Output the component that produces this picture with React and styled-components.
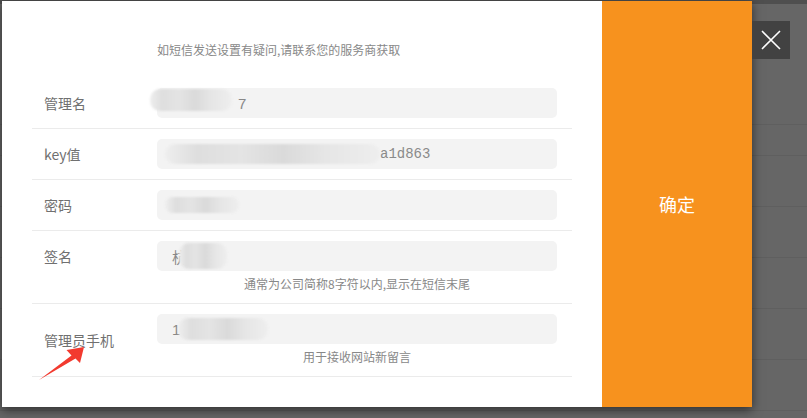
import React from "react";
import styled, { createGlobalStyle } from "styled-components";

const GlobalStyle = createGlobalStyle`
  html, body {
    margin: 0;
    padding: 0;
    width: 807px;
    height: 418px;
    overflow: hidden;
  }
  body {
    font-family: "Noto Sans CJK SC", "Noto Sans", sans-serif;
  }
`;

const Backdrop = styled.div`
  width: 807px;
  height: 418px;
  background-color: #666;
  background-image:
    linear-gradient(#4f4f4f 0 4px, transparent 4px),
    linear-gradient(transparent 124px, #5f5f5f 124px 125px, transparent 125px),
    repeating-linear-gradient(180deg, #5f5f5f 0 1px, transparent 1px 51px);
  background-repeat: no-repeat;
  background-size: 100% 100%, 100% 100%, 100% 300px;
  background-position: 0 0, 0 0, 0 155px;
  padding: 1px 0 0 2px;
  box-sizing: border-box;
`;

const Dialog = styled.div`
  position: relative;
  display: flex;
  width: 750px;
  height: 406px;
  box-shadow: 0 3px 10px rgba(0, 0, 0, 0.55);
`;

const FormPane = styled.div`
  width: 600px;
  background: #fff;
  padding: 0 30px;
  box-sizing: border-box;
`;

const Notice = styled.div`
  padding: 40px 0 19px 125px;
  font-size: 12px;
  line-height: 18px;
  color: #888;
`;

const Row = styled.div`
  display: flex;
  align-items: ${({ $labelLow }) => ($labelLow ? "center" : "flex-start")};
  border-bottom: 1px solid #ebebeb;
  padding: 10px 0;
`;

const Label = styled.div`
  width: 125px;
  padding-left: 12px;
  box-sizing: border-box;
  font-size: 14px;
  line-height: 30px;
  color: #707070;
`;

const Field = styled.div`
  width: 400px;
`;

const Input = styled.div`
  height: 30px;
  border-radius: 5px;
  background: #f3f3f3;
  padding-left: 15px;
  display: flex;
  align-items: center;
  font-family: "Liberation Sans", "Noto Sans CJK SC", sans-serif;
  font-size: 15px;
  color: #888;
  white-space: nowrap;
`;

const Mono = styled.span`
  font-family: "Liberation Mono", "DejaVu Sans Mono", monospace;
  font-size: 14px;
  color: #8a8a8a;
`;

const Smudge = styled.span`
  display: inline-block;
  width: ${({ $w }) => $w}px;
  height: ${({ $h }) => $h || 20}px;
  margin-left: ${({ $ml }) => $ml || 0}px;
  margin-top: ${({ $mt }) => $mt || 0}px;
  border-radius: 10px;
  background: linear-gradient(
    90deg,
    #eeeeee 0%,
    #dedede 15%,
    #e4e4e4 35%,
    #dadada 55%,
    #e6e6e6 75%,
    #eeeeee 100%
  );
  filter: blur(1px);
`;

const Hint = styled.div`
  padding-top: 4px;
  font-size: 12px;
  line-height: 18px;
  color: #888;
  text-align: center;
`;

const ConfirmPane = styled.button`
  width: 150px;
  border: none;
  background: #f7921e;
  color: #fff;
  font-family: inherit;
  font-size: 18px;
  cursor: pointer;
`;

const CloseButton = styled.button`
  position: absolute;
  left: 100%;
  top: 20px;
  width: 38px;
  height: 38px;
  border: none;
  padding: 0;
  background: #424242;
  display: flex;
  align-items: center;
  justify-content: center;
`;

const Arrow = styled.svg`
  position: absolute;
  left: 34px;
  top: 340px;
  width: 56px;
  height: 42px;
`;

const App = () => (
  <>
    <GlobalStyle />
    <Backdrop>
      <Dialog>
        <FormPane>
          <Notice>如短信发送设置有疑问,请联系您的服务商获取</Notice>
          <Row>
            <Label>管理名</Label>
            <Field>
              <Input>
                <Smudge $w={82} $h={22} $ml={-22} $mt={-6} />
                <span style={{ marginLeft: 6 }}>7</span>
              </Input>
            </Field>
          </Row>
          <Row>
            <Label>key值</Label>
            <Field>
              <Input>
                <Smudge $w={215} $ml={-7} />
                <Mono>a1d863</Mono>
              </Input>
            </Field>
          </Row>
          <Row>
            <Label>密码</Label>
            <Field>
              <Input>
                <Smudge $w={74} $h={16} $ml={-7} />
              </Input>
            </Field>
          </Row>
          <Row>
            <Label>签名</Label>
            <Field>
              <Input>
                <span>杭</span>
                <Smudge $w={48} $h={26} $ml={-8} />
              </Input>
              <Hint>通常为公司简称8字符以内,显示在短信末尾</Hint>
            </Field>
          </Row>
          <Row $labelLow>
            <Label>管理员手机</Label>
            <Field>
              <Input>
                <span>1</span>
                <Smudge $w={90} $h={22} $ml={-2} />
              </Input>
              <Hint>用于接收网站新留言</Hint>
            </Field>
          </Row>
        </FormPane>
        <ConfirmPane>确定</ConfirmPane>
        <CloseButton aria-label="close">
          <svg width="22" height="22" viewBox="0 0 22 22">
            <path d="M2 2 L20 20 M20 2 L2 20" stroke="#fff" strokeWidth="1.6" />
          </svg>
        </CloseButton>
        <Arrow viewBox="0 0 56 42">
          <path d="M3 39 L35.5 14.5 L30.5 9 L48 6 L44 22 L39.5 17.5 Z" fill="#f23a2f" />
        </Arrow>
      </Dialog>
    </Backdrop>
  </>
);

export default App;
